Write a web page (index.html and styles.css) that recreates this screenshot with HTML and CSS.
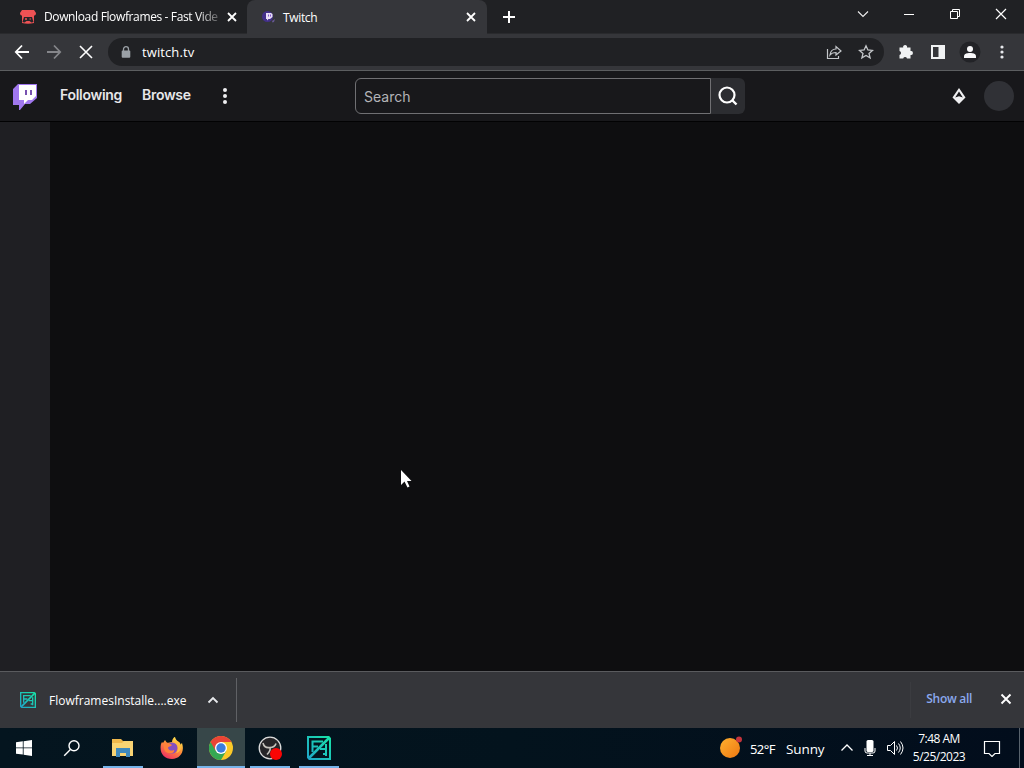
FILE: index.html
```
<!DOCTYPE html>
<html lang="en">
<head>
    <meta charset="UTF-8">
    <meta name="viewport" content="width=device-width, initial-scale=1.0">
    <title>Twitch</title>
    <link rel="stylesheet" href="styles.css">
</head>
<body>
    <div class="desktop">
        <!-- Browser tabs -->
        <div class="tab-strip">
            <div class="tab">
                <svg class="tab-icon" width="16" height="16" viewBox="0 0 16 16">
                    <path d="M2 1h12l2 3c0 2-1 2.500-2 2.500v7.500q-6 1.500-12 0V6.500C1 6.500 0 6 0 4z" fill="#ee5254"/>
                    <path d="M1 5.500h14M4 8h8l1.500 5-2 .5-2-1.500h-3l-2 1.500-2-.5z" fill="#25262a"/>
                    <path d="M5 10h2M6 9v2M9.500 10h1.500" stroke="#ee5254"/>
                </svg>
                <span class="tab-title tab-long">Download Flowframes - Fast Vide</span>
                <svg class="tab-close" width="10" height="10" viewBox="0 0 10 10"><path d="M1 1l8 8M9 1L1 9" stroke="#fff" stroke-width="1.800"/></svg>
            </div>
            <div class="tab tab-active">
                <svg class="tab-icon" width="16" height="16" viewBox="0 0 16 16">
                    <circle cx="6.500" cy="7.500" r="5.500" fill="#43308a"/>
                    <path d="M5 4h5l1.500 1v3L9 10H7.500L6 11.500V10H5z" fill="#e8def7"/>
                    <path d="M7.500 5.500v2M9.500 5.500v2" stroke="#8055cc"/>
                    <path d="M11 12l3-2-1 3-1.500.5z" fill="#665892"/>
                </svg>
                <span class="tab-title">Twitch</span>
                <svg class="tab-close" width="10" height="10" viewBox="0 0 10 10"><path d="M1 1l8 8M9 1L1 9" stroke="#fff" stroke-width="1.800"/></svg>
            </div>
            <svg class="new-tab" width="12" height="12" viewBox="0 0 12 12"><path d="M6 0v12M0 6h12" stroke="#fff" stroke-width="2"/></svg>
            <div class="window-buttons">
                <svg width="12" height="12" viewBox="0 0 12 12"><path d="M1 3.500l5 5 5-5" fill="none" stroke="#eee" stroke-width="1.100"/></svg>
                <svg width="12" height="12" viewBox="0 0 12 12"><path d="M1 6.500h10" stroke="#fff"/></svg>
                <svg width="12" height="12" viewBox="0 0 12 12"><path d="M1.500 3.500h7v7h-7zM3.500 3.500v-2h7v7h-2" fill="none" stroke="#fff"/></svg>
                <svg width="12" height="12" viewBox="0 0 12 12"><path d="M1 1l10 10M11 1L1 11" stroke="#fff" stroke-width="1.200"/></svg>
            </div>
        </div>

        <!-- Toolbar and address bar -->
        <div class="toolbar">
            <div class="nav-buttons">
                <svg width="16" height="16" viewBox="0 0 16 16"><path d="M15 8H2M8 1.500L1.800 8 8 14.500" fill="none" stroke="#fff" stroke-width="1.800"/></svg>
                <svg width="16" height="16" viewBox="0 0 16 16"><path d="M1 8h13M8 1.500L14.200 8 8 14.500" fill="none" stroke="#85868a" stroke-width="1.800"/></svg>
                <svg width="16" height="16" viewBox="0 0 16 16"><path d="M2 2l12 12M14 2L2 14" stroke="#fff" stroke-width="1.600"/></svg>
            </div>
            <div class="address-bar">
                <svg class="lock" width="10" height="12" viewBox="0 0 10 12"><path d="M2.500 5V3.200a2.500 2.500 0 0 1 5 0V5" fill="none" stroke="#9aa0a6" stroke-width="1.300"/><rect x=".7" y="4.500" width="8.600" height="7.300" rx="1" fill="#9aa0a6"/></svg>
                <span class="url">twitch.tv</span>
                <svg class="share" width="16" height="16" viewBox="0 0 16 16"><path d="M1.500 5v9.500h11V12M4 11c.5-4 2.500-6 6-6V2.500L15 7l-5 4V8.500c-3 0-4.500.5-6 2.500z" fill="none" stroke="#c4c7ca" stroke-width="1.200"/></svg>
                <svg width="16" height="16" viewBox="0 0 16 16"><path d="M8 1.800l1.900 4.200 4.600.4-3.500 3 1.100 4.500L8 11.500l-4.100 2.400L5 9.400l-3.500-3L6.100 6z" fill="none" stroke="#c4c7ca" stroke-width="1.300"/></svg>
            </div>
            <div class="toolbar-icons">
                <svg width="16" height="16" viewBox="0 0 16 16"><path d="M1.500 3.500h3.700a2 2 0 1 1 3.800 0h3.500v3.600a2 2 0 1 1 0 3.900v3.500H9a2 2 0 0 0-3.800 0H1.500V11a2 2 0 0 0 0-3.900z" fill="#f1f3f4"/></svg>
                <svg width="16" height="16" viewBox="0 0 16 16"><path d="M2 2h12v12H2zM9.500 2h4.500v12H9.500z" fill="none" stroke="#f1f3f4" stroke-width="2"/><path d="M9.500 2H14v12H9.500z" fill="#f1f3f4"/></svg>
                <svg width="22" height="22" viewBox="0 0 22 22"><circle cx="11" cy="11" r="10.500" fill="#222327"/><circle cx="11" cy="8" r="3" fill="#f8f8fa"/><path d="M5 17v-1.500c0-3 3-3.500 6-3.500s6 .5 6 3.500V17z" fill="#f8f8fa"/></svg>
                <svg width="4" height="16" viewBox="0 0 4 16"><g fill="#e8eaed"><circle cx="2" cy="3" r="1.600"/><circle cx="2" cy="8" r="1.600"/><circle cx="2" cy="13" r="1.600"/></g></svg>
            </div>
        </div>

        <!-- Twitch -->
        <div class="top-nav">
            <svg class="logo" width="26" height="30" viewBox="0 0 26 30">
                <path d="M6 3h19v14l-7 6h-5l-5 6h-1v-5H1V8z" fill="#a077ee"/>
                <path d="M7 4h17v11l-4 4h-4l-4 4v-4H7z" fill="#fff"/>
                <path d="M14 9v5M19 9v5" stroke="#7851b0" stroke-width="2"/>
            </svg>
            <span class="nav-link">Following</span>
            <span class="nav-link browse">Browse</span>
            <svg class="nav-more" width="6" height="18" viewBox="0 0 6 18"><g fill="#efeff1"><circle cx="3" cy="3" r="2"/><circle cx="3" cy="9" r="2"/><circle cx="3" cy="15" r="2"/></g></svg>
            <div class="search">
                <div class="search-input">Search</div>
                <div class="search-button">
                    <svg width="20" height="20" viewBox="0 0 20 20"><circle cx="9" cy="9" r="7.500" fill="none" stroke="#fff" stroke-width="2.200"/><path d="M14 14l4.500 4.500" stroke="#fff" stroke-width="2.400"/></svg>
                </div>
            </div>
            <svg class="drop" width="14" height="18" viewBox="0 0 14 18"><path d="M7 1l6.500 9.500L7 17 .5 10.500z" fill="#efeff1"/><path d="M7 4.500l3.800 6L7 9.300l-3.800 1.200z" fill="#18181b"/></svg>
            <div class="avatar"></div>
        </div>
        <div class="page">
            <div class="side-nav"></div>
            <div class="content"></div>
        </div>

        <!-- Downloads -->
        <div class="downloads">
            <div class="download-item">
                <svg width="16" height="16" viewBox="0 0 24 24"><use href="#flow"/></svg>
                <span class="file-name">FlowframesInstalle....exe</span>
                <svg width="12" height="12" viewBox="0 0 12 12"><path d="M1.500 8.500L6 4l4.500 4.500" fill="none" stroke="#e8eaed" stroke-width="1.800"/></svg>
            </div>
            <div class="show-all">Show all</div>
            <svg class="shelf-close" width="12" height="12" viewBox="0 0 12 12"><path d="M1.500 1.500l9 9M10.500 1.500l-9 9" stroke="#fff" stroke-width="1.900"/></svg>
        </div>

        <!-- Taskbar -->
        <div class="taskbar">
            <div class="task start">
                <svg width="16" height="16" viewBox="0 0 16 16"><path d="M0 2.300L6.800 1.300v6.200H0zM7.600 1.200L16 0v7.500H7.600zM0 8.300h6.800v6.300L0 13.700zM7.600 8.300H16V16l-8.400-1.200z" fill="#fff"/></svg>
            </div>
            <div class="task find">
                <svg width="18" height="18" viewBox="0 0 18 18"><circle cx="11" cy="6.800" r="5" fill="none" stroke="#fff" stroke-width="1.400"/><path d="M7.400 10.500L1.200 16.700" stroke="#fff" stroke-width="1.400"/></svg>
            </div>
            <div class="task running">
                <svg width="24" height="24" viewBox="0 0 24 24"><path d="M1 3h9l2 2h10v15H1z" fill="#efb84c"/><path d="M1 7h10l2-2h9v15H1z" fill="#f9d473"/><path d="M5 12h14v9h-4v-4H9v4H5z" fill="#3f89bd"/></svg>
            </div>
            <div class="task">
                <svg width="24" height="24" viewBox="0 0 24 24">
                    <defs>
                        <linearGradient id="fire" x1=".8" y1="0" x2=".2" y2="1"><stop stop-color="#fff04f"/><stop offset=".45" stop-color="#ff9038"/><stop offset="1" stop-color="#ef2865"/></linearGradient>
                    </defs>
                    <path d="M1 8l1-2 1 1 2-3 2 3 5-1c0-3 2-5 3-5 1 4 4 4 5 8l2-2c3 9-2 16-10 16S-1 17 1 8z" fill="url(#fire)"/>
                    <circle cx="12" cy="12" r="5.500" fill="#8450bf"/>
                    <path d="M4 7c3-1 5 0 8 2-1 2-4 1-4 3 1 3 4 3 6 2 1 2-2 4-5 3-4 0-6-4-5-10z" fill="#ff823b"/>
                    <path d="M13 6c6 1 6 8 3 11 5-1 6-6 4-10-1-2-4-2-7-1z" fill="#ffbd3f"/>
                </svg>
            </div>
            <div class="task running selected">
                <svg width="24" height="24" viewBox="0 0 24 24"><circle cx="12" cy="12" r="12" fill="#fbc928"/><path d="M1.600 6A12 12 0 0 0 12 24l5.200-9H12z" fill="#35a853"/><path d="M1.600 6A12 12 0 0 1 22.400 6H12v6l-5.200 3z" fill="#e94436"/><circle cx="12" cy="12" r="6" fill="#fff"/><circle cx="12" cy="12" r="4.700" fill="#3c7ddd"/></svg>
            </div>
            <div class="task running">
                <svg width="24" height="24" viewBox="0 0 24 24"><circle cx="12" cy="12" r="10.800" fill="#262528" stroke="#ddd" stroke-width="1.300"/><path d="M5 7c1 4 4 5 7 4.500M12 11.500c3 0 5-1 6-4M12 11.500c1 3-1 5-3 7" fill="none" stroke="#c6c3bd" stroke-width="1.600"/><circle cx="18" cy="18" r="6" fill="#fa0505"/></svg>
            </div>
            <div class="task running last">
                <svg width="24" height="24" viewBox="0 0 24 24">
                    <defs>
                        <linearGradient id="teal" gradientUnits="userSpaceOnUse" x1="0" y1="24" x2="24" y2="0"><stop stop-color="#20a3cb"/><stop offset="1" stop-color="#18e6a7"/></linearGradient>
                    </defs>
                    <g id="flow" fill="none" stroke="url(#teal)" stroke-width="2">
                        <path d="M1 22V1h21"/>
                        <path d="M2 23h21V2"/>
                        <path d="M1 23L23 1" stroke-width="2.500"/>
                        <path d="M5.500 16V5.500H16M5.500 10.500H11"/>
                        <path d="M19 8v12M19 13h-6M19 18h-3"/>
                    </g>
                </svg>
            </div>
            <div class="weather">
                <svg width="24" height="24" viewBox="0 0 24 24"><defs><linearGradient id="sun" x2="1" y2="1"><stop stop-color="#ffb02f"/><stop offset="1" stop-color="#ee7812"/></linearGradient></defs><circle cx="11" cy="12" r="10" fill="url(#sun)"/><circle cx="20" cy="3.500" r="3" fill="#c4343c"/></svg>
                <span class="temp">52°F</span>
                <span class="sunny">Sunny</span>
            </div>
            <div class="tray">
                <svg width="14" height="12" viewBox="0 0 14 12"><path d="M1.500 8.500L7 3l5.500 5.500" fill="none" stroke="#fff" stroke-width="1.300"/></svg>
                <svg class="mic" width="12" height="16" viewBox="0 0 12 16"><rect x="2.500" y="0" width="7" height="12" rx="1.500" fill="#fff"/><path d="M1 8v3q0 2 2 2h6q2 0 2-2V8M6 13v2.500M3 15.500h6" fill="none" stroke="#fff"/></svg>
                <svg width="18" height="16" viewBox="0 0 18 16"><path d="M1.500 5.500h3l4-4v13l-4-4h-3zM10.500 5.500q2 2.500 0 5M12.500 3.500q3.500 4.500 0 9M14.500 1.500q5 6.500 0 13" fill="none" stroke="#fff"/></svg>
            </div>
            <div class="clock">
                <div class="time">7:48 AM</div>
                <div class="date">5/25/2023</div>
            </div>
            <svg class="notices" width="18" height="18" viewBox="0 0 18 18"><path d="M1.500 2.500h15v12H12l-3 3-3-3H1.500z" fill="none" stroke="#fff" stroke-width="1.200"/></svg>
            <div class="peek"></div>
        </div>

        <svg class="cursor" width="13" height="20" viewBox="0 0 13 20"><path d="M1 1v15l3.500-3.500 3 6 2-1-2.500-5.500h4.500z" fill="#fff"/></svg>
    </div>
</body>
</html>
```
FILE: styles.css
```
* {
    box-sizing: border-box;
}
body {
    margin: 0;
    background-color: #0e0e10;
    font-family: "Open Sans", "Noto Sans", sans-serif;
    color: #fff;
    overflow: hidden;
}
svg {
    display: block;
    flex: none;
}
.desktop {
    position: relative;
    display: flex;
    flex-direction: column;
    width: 1024px;
    height: 768px;
}
.tab-strip {
    display: flex;
    height: 34px;
    background: #202124;
    border-bottom: 1px solid #292a2d;
}
.tab {
    display: flex;
    align-items: center;
    width: 247px;
    padding: 0 10px 0 20px;
    font-size: 12px;
}
.tab-active {
    width: 240px;
    height: 34px;
    padding: 0 11px 0 14px;
    background: #35363a;
    border-radius: 8px 8px 0 0;
}
.tab-icon {
    margin-right: 8px;
}
.tab-active .tab-icon {
    margin-right: 6px;
}
.tab-title {
    white-space: nowrap;
}
.tab-active .tab-title {
    letter-spacing: -0.35px;
}
.tab-long {
    width: 176px;
    letter-spacing: -0.37px;
    -webkit-mask-image: linear-gradient(to right, #000 87%, rgba(0, 0, 0, 0.2));
    mask-image: linear-gradient(to right, #000 87%, rgba(0, 0, 0, 0.2));
}
.tab-close {
    margin-left: auto;
}
.new-tab {
    margin: 11px 0 0 16px;
}
.window-buttons {
    display: flex;
    gap: 34px;
    margin: 8px 17px 0 auto;
}
.toolbar {
    display: flex;
    align-items: center;
    height: 37px;
    background: #35363a;
    border-bottom: 1px solid #5c5e60;
}
.nav-buttons {
    display: flex;
    gap: 16px;
    width: 108px;
    padding-left: 14px;
}
.address-bar {
    display: flex;
    align-items: center;
    width: 776px;
    height: 28px;
    padding: 0 10px 0 13px;
    background: #202124;
    border-radius: 14px;
}
.url {
    margin-left: 11px;
    font-size: 13px;
    letter-spacing: 0.1px;
}
.share {
    margin: 0 16px 0 auto;
}
.toolbar-icons {
    display: flex;
    align-items: center;
    padding-left: 14px;
    gap: 16px;
}
.toolbar-icons svg:nth-child(3) {
    margin: 0 3px 0 -3px;
}
.top-nav {
    display: flex;
    align-items: center;
    height: 51px;
    padding: 0 10px 0 12px;
    background: #18181b;
    border-bottom: 1px solid #020203;
    font-family: Inter, "Liberation Sans", sans-serif;
}
.nav-link {
    width: 62px;
    margin-left: 22px;
    padding-bottom: 3px;
    color: #e7e7e9;
    font-size: 14px;
    font-weight: 600;
    letter-spacing: -0.3px;
    white-space: nowrap;
}
.browse {
    width: 49px;
    margin-left: 20px;
}
.nav-more {
    margin-left: 31px;
}
.search {
    display: flex;
    width: 390px;
    height: 36px;
    margin-left: 127px;
}
.search-input {
    width: 356px;
    padding-left: 8px;
    border: 1px solid #707073;
    border-radius: 6px 0 0 6px;
    color: #b4b4b8;
    font-size: 14px;
    line-height: 36px;
}
.search-button {
    display: flex;
    align-items: center;
    justify-content: center;
    width: 34px;
    background: #2c2d31;
    border-radius: 0 6px 6px 0;
}
.drop {
    margin-left: auto;
}
.avatar {
    width: 30px;
    height: 30px;
    margin-left: 18px;
    background: #303136;
    border-radius: 50%;
}
.page {
    display: flex;
    flex: 1;
}
.side-nav {
    width: 50px;
    background: #1f1f23;
}
.content {
    flex: 1;
    background: #0e0e10;
}
.downloads {
    display: flex;
    align-items: center;
    height: 57px;
    padding-right: 12px;
    background: #35363a;
    border-top: 1px solid #5a5b5e;
    font-size: 12px;
}
.download-item {
    display: flex;
    align-items: center;
    width: 237px;
    height: 44px;
    padding-left: 20px;
    border-right: 1px solid #606165;
}
.file-name {
    width: 139px;
    margin: 1px 19px 0 13px;
    white-space: nowrap;
}
.show-all {
    height: 36px;
    margin: 0 28px 0 auto;
    padding-left: 15px;
    border-left: 1px solid #3b3c40;
    color: #8ba9ee;
    font-weight: 600;
    line-height: 34px;
    letter-spacing: -0.3px;
}
.shelf-close {
    margin-bottom: 2px;
}
.taskbar {
    display: flex;
    align-items: center;
    height: 40px;
    background: linear-gradient(to right, #04151f, #03131d 50%, #020d1c);
}
.task {
    display: flex;
    align-items: center;
    justify-content: center;
    width: 48px;
    height: 40px;
    margin-right: 1px;
}
.start {
    margin-right: 0;
}
.find {
    width: 47px;
    margin-right: 8px;
}
.running {
    width: 40px;
    margin-right: 5px;
    padding-top: 2px;
    border-bottom: 2px solid #76b4ea;
}
.selected {
    width: 48px;
    background: #374749;
}
.last {
    margin: 0 0 0 4px;
}
.weather {
    display: flex;
    align-items: center;
    margin-left: auto;
    font-size: 13.5px;
}
/* Noto has a round degree sign */
.temp {
    width: 29px;
    margin: 1px 7px 0;
    font-family: "Noto Sans", sans-serif;
    font-size: 13px;
    letter-spacing: -0.6px;
}
.sunny {
    width: 39px;
    margin-top: 1px;
    letter-spacing: -0.1px;
}
.tray {
    display: flex;
    align-items: center;
    gap: 10px;
    margin-left: 15px;
}
.clock {
    width: 56px;
    margin: 0 16px 0 7px;
    font-size: 12px;
    line-height: 18px;
    letter-spacing: -0.5px;
    text-align: center;
}
.notices {
    margin-right: 18px;
}
.peek {
    width: 5px;
    height: 40px;
    border-left: 1px solid #59636d;
}
/* mouse pointer over the page */
.cursor {
    position: absolute;
    left: 400px;
    top: 469px;
}
```
